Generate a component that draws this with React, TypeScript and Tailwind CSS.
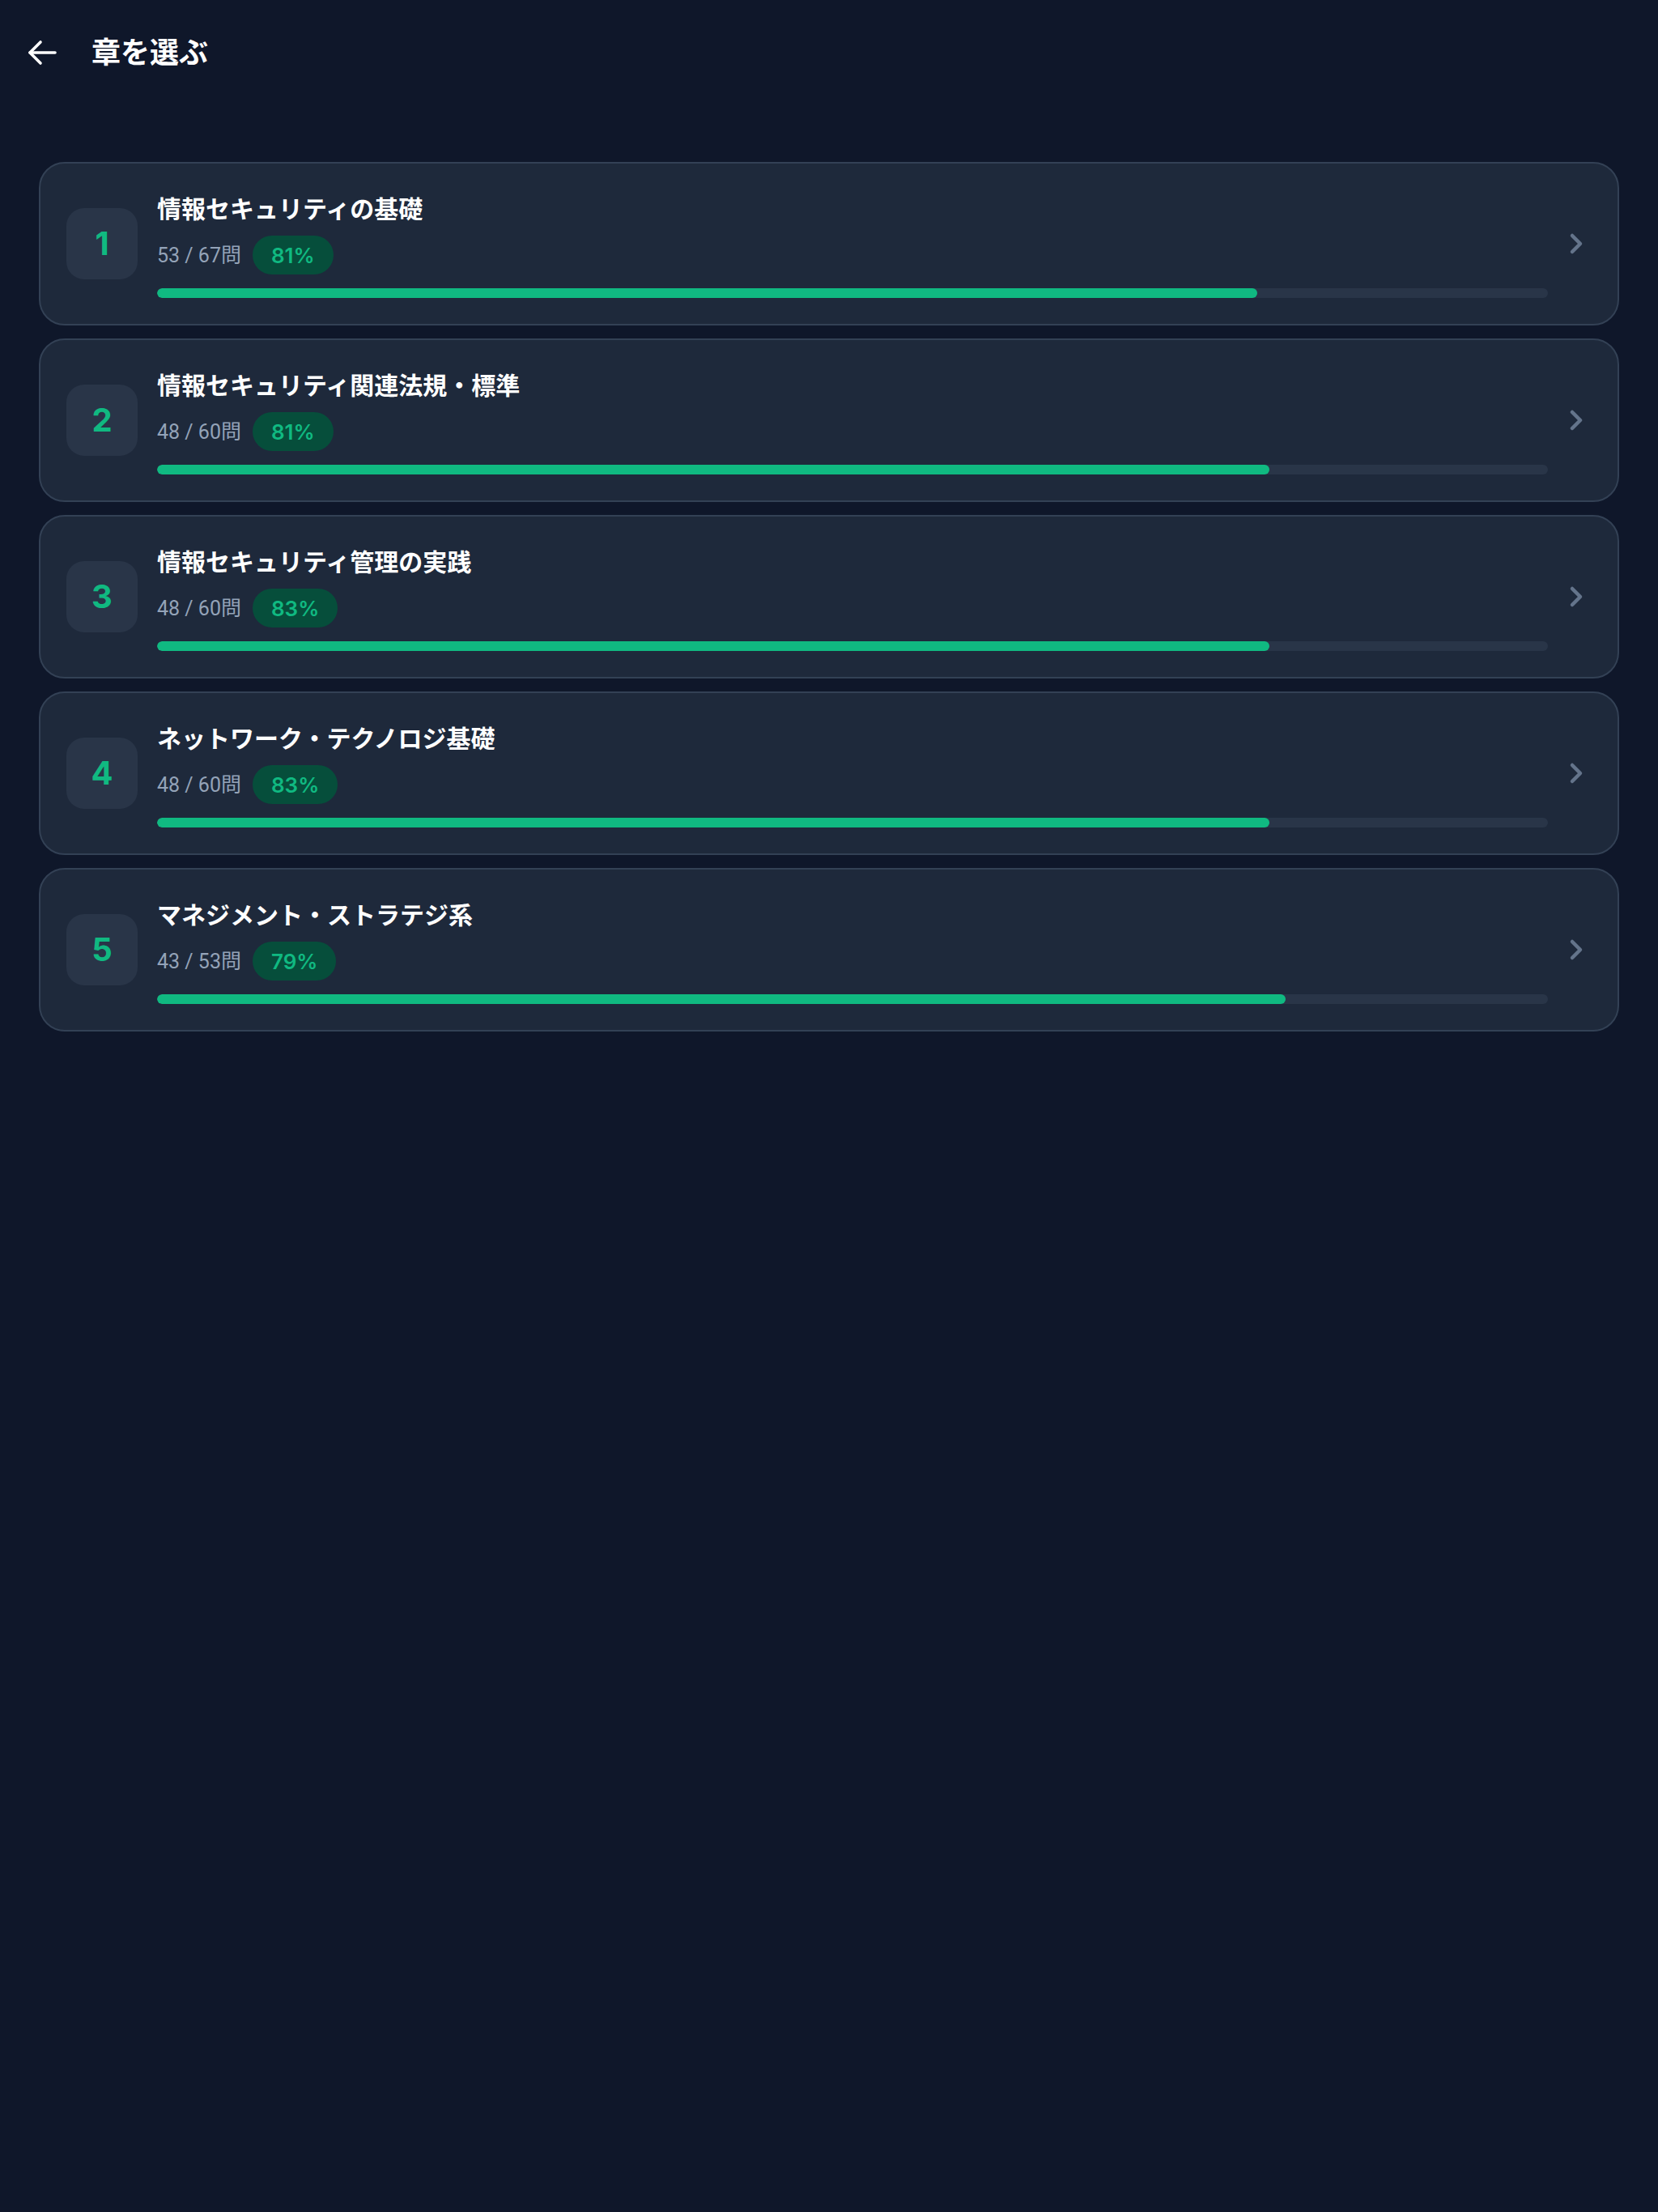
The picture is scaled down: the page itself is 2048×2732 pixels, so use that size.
import React from "react";

const chapters = [
  { n: 1, title: "情報セキュリティの基礎", done: 53, total: 67, pct: 81 },
  { n: 2, title: "情報セキュリティ関連法規・標準", done: 48, total: 60, pct: 81 },
  { n: 3, title: "情報セキュリティ管理の実践", done: 48, total: 60, pct: 83 },
  { n: 4, title: "ネットワーク・テクノロジ基礎", done: 48, total: 60, pct: 83 },
  { n: 5, title: "マネジメント・ストラテジ系", done: 43, total: 53, pct: 79 },
];

export default function App() {
  return (
    <div className="min-h-[2732px] w-full bg-[#0f172a] text-white font-['Inter','Noto_Sans_CJK_JP',sans-serif]">
      <header className="flex h-[130px] items-center px-[34px]">
        <svg width="36" height="32" viewBox="0 0 36 32" fill="none" stroke="white" strokeWidth="3.6" strokeLinecap="round" strokeLinejoin="round">
          <path d="M34 16H3" />
          <path d="M16 3L3 16L16 29" />
        </svg>
        <h1 className="ml-[43px] text-[36px] font-bold leading-none text-white">章を選ぶ</h1>
      </header>
      <main className="mt-[70px] flex flex-col gap-[16px] px-[48px]">
        {chapters.map((c) => (
          <div
            key={c.n}
            className="flex items-center rounded-[32px] border-2 border-[#334155] bg-[#1e293b] px-[32px] py-[32px]"
          >
            <div className="flex h-[88px] w-[88px] shrink-0 items-center justify-center rounded-[22px] bg-[#293548] text-[40px] font-bold text-[#10b981]">
              {c.n}
            </div>
            <div className="ml-[24px] flex min-w-0 flex-1 flex-col">
              <div className="text-[30px] font-bold leading-[48px] text-white">{c.title}</div>
              <div className="mt-[9px] flex h-[48px] items-center">
                <span className="font-['Roboto','Noto_Sans_CJK_JP',sans-serif] text-[25px] leading-none text-[#94a3b8]">
                  {c.done} / {c.total}問
                </span>
                <span className="ml-[14px] flex h-[48px] items-center rounded-full bg-[#064e3b] px-[23px] text-[26px] font-semibold text-[#10b981]">
                  {c.pct}%
                </span>
              </div>
              <div className="mt-[17px] h-[12px] w-full overflow-hidden rounded-full bg-[#293548]">
                <div
                  className="h-full rounded-full bg-[#10b981]"
                  style={{ width: `${(c.done / c.total) * 100}%` }}
                />
              </div>
            </div>
            <div className="ml-[6px] flex h-[48px] w-[48px] shrink-0 items-center justify-center">
              <svg width="48" height="48" viewBox="0 0 48 48" fill="none" stroke="#64748b" strokeWidth="4.5" strokeLinecap="round" strokeLinejoin="round">
                <path d="M24 14L34 24L24 34" />
              </svg>
            </div>
          </div>
        ))}
      </main>
    </div>
  );
}
